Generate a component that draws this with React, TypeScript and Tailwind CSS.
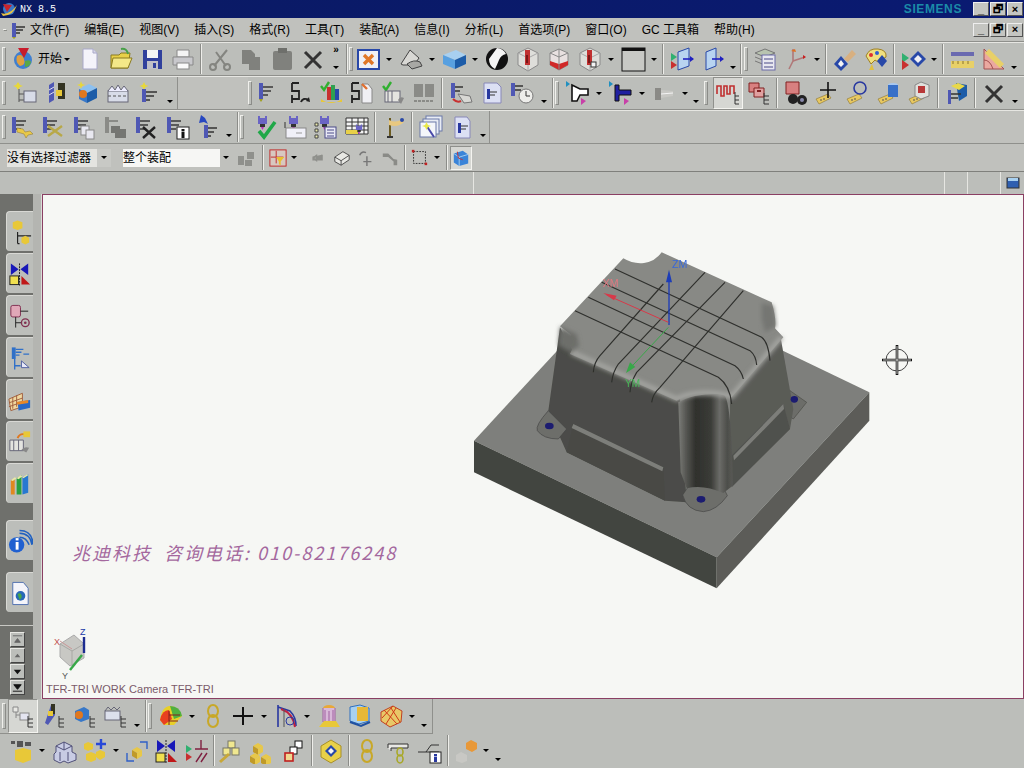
import type { ReactNode } from 'react'

// small helpers for the toolbars
function Ico({ children }: { children: ReactNode }) {
    return (
        <svg viewBox="0 0 26 26" className="h-[26px] w-[26px] shrink-0">
            {children}
        </svg>
    )
}

function T({ children, className = 'w-[31px]' }: { children: ReactNode; className?: string }) {
    return (
        <div className={`flex h-full shrink-0 items-center justify-center ${className}`}>
            <Ico>{children}</Ico>
        </div>
    )
}

function Arrow() {
    return (
        <div className="flex h-full w-[12px] shrink-0 items-center justify-center">
            <span className="border-x-[3px] border-t-[3px] border-x-transparent border-t-black" />
        </div>
    )
}

function More({ className = 'w-[12px]' }: { className?: string }) {
    return (
        <div className={`flex h-full shrink-0 items-end justify-center pb-[6px] ${className}`}>
            <span className="border-x-[3px] border-t-[3px] border-x-transparent border-t-black" />
        </div>
    )
}

function Sep() {
    return (
        <div className="flex h-full w-[6px] shrink-0 justify-center py-[1px]">
            <div className="w-[2px] border-l border-r border-l-[#8b8c88] border-r-[#eeeeea]" />
        </div>
    )
}

function Handle({ className = '' }: { className?: string }) {
    return (
        <div className={`my-[4px] w-[4px] shrink-0 rounded-[1px] border border-[#8b8c88] border-l-[#f0f0ec] border-t-[#f0f0ec] ${className}`} />
    )
}

function Row({ children }: { children: ReactNode }) {
    return (
        <div className="flex h-[34px] shrink-0 border-y border-t-[#e6e6e2] border-b-[#8f908c] bg-[#bcbeba]">
            {children}
        </div>
    )
}

// shared drawing bits
const Ent = () => (
    <g>
        <rect x="3" y="3" width="4" height="16" fill="#4f58b4" />
        <path d="M7 7h10M7 11h8M7 15h5" stroke="#3a3a3a" strokeWidth="1.6" />
    </g>
)
const Head = () => (
    <g>
        <path d="M7 2h2v2h5V2h2v8h-9z" fill="#6a64c4" />
        <rect x="9" y="10" width="5" height="3" fill="#333" />
        <path d="M10 13h3l-1.5 3z" fill="#c030c0" />
    </g>
)
const Tag = () => (
    <g>
        <path d="M2 19l12-5 3 4-12 6z" fill="#e8c860" stroke="#8a7430" strokeWidth=".6" />
        <path d="M6 20h2M9 19h2" stroke="#555" strokeWidth="1" />
    </g>
)
const RedDrill = () => (
    <g>
        <path d="M3 7l10-5 10 5v12l-10 6-10-6z" fill="#dedeDa" stroke="#8a8a8a" />
        <path d="M3 7l10 5 10-5M13 12v13" fill="none" stroke="#a8a8a8" />
        <rect x="10" y="4" width="5" height="15" fill="#c03030" />
        <rect x="11" y="9" width="2" height="8" fill="#7a1818" />
    </g>
)
const Cube = ({ fill = '#e8c848', side = '#c09a28' }: { fill?: string; side?: string }) => (
    <g>
        <path d="M4 9l5-3 5 3-5 3z" fill={fill} />
        <path d="M4 9l5 3v6l-5-3z" fill={side} />
        <path d="M14 9l-5 3v6l5-3z" fill={fill} />
    </g>
)
const Tree = () => <path d="M18 13v11M18 16h5M18 20h5M18 24h5" stroke="#333" strokeWidth="1" fill="none" />

export default function App() {
    return (
        <div className="flex h-[768px] w-[1024px] flex-col overflow-hidden bg-[#bcbeba] font-['Liberation_Sans','Noto_Sans_CJK_SC',sans-serif] text-black">
            {/* Title bar */}
            <div className="flex h-[18px] shrink-0 items-center bg-gradient-to-r from-[#0a1a63] to-[#0a1a72] pr-[1px]">
                <svg viewBox="0 0 18 18" className="h-[18px] w-[18px] shrink-0">
                    <circle cx="9" cy="9" r="6" fill="#3a78c8" />
                    <path d="M3 4l9 1-5 7z" fill="#c8242c" />
                    <path d="M1 13q8 3 16-8-3 10-14 11z" fill="#e8c040" />
                </svg>
                <span className="ml-[2px] font-['Liberation_Mono'] text-[10px] text-white">NX 8.5</span>
                <span className="ml-auto mr-[11px] text-[12px] font-bold tracking-[0.6px] text-[#1b8ba8]">SIEMENS</span>
                <WinButtons />
            </div>

            {/* Menu */}
            <div className="flex h-[24px] shrink-0 items-center border-b border-[#8f908c] bg-[#c0c1bd] pr-[1px] text-[12px]">
                <Handle className="ml-[3px]" />
                <svg viewBox="0 0 20 20" className="ml-[1px] h-[20px] w-[20px] shrink-0">
                    <rect x="4" y="3" width="4" height="14" fill="#4f58b4" />
                    <path d="M8 7h9M8 10h7M8 13h4" stroke="#333" strokeWidth="1.4" />
                    <path d="M4 17h4l-2 2z" fill="#a0a020" />
                </svg>
                <div className="flex gap-[15px] whitespace-nowrap pl-[2px]">
                    <span>文件(F)</span>
                    <span>编辑(E)</span>
                    <span>视图(V)</span>
                    <span>插入(S)</span>
                    <span>格式(R)</span>
                    <span>工具(T)</span>
                    <span>装配(A)</span>
                    <span>信息(I)</span>
                    <span>分析(L)</span>
                    <span>首选项(P)</span>
                    <span>窗口(O)</span>
                    <span>GC 工具箱</span>
                    <span>帮助(H)</span>
                </div>
                <div className="ml-auto"><WinButtons /></div>
            </div>

            {/* Toolbar 1 */}
            <Row>
                <Handle className="ml-[2px]" />
                <div className="flex h-full w-[68px] shrink-0 items-center pl-[5px] text-[12px]">
                    <svg viewBox="0 0 24 24" className="h-[24px] w-[24px] shrink-0">
                        <circle cx="12" cy="13" r="9" fill="#3f7fd0" />
                        <path d="M6 9q5-3 7 3t-4 7q-5-4-3-10z" fill="#e0a040" />
                        <path d="M14 14q5-2 6 1-1 5-6 5z" fill="#58a848" />
                        <path d="M7 1h11l-5 10z" fill="#c81c2c" />
                    </svg>
                    <span className="ml-[3px]">开始</span>
                    <span className="ml-[2px] border-x-[3px] border-t-[3px] border-x-transparent border-t-black" />
                </div>
                <T><path d="M6 3h10l4 4v16H6z" fill="#f4f4fa" stroke="#a8a8c8" /><path d="M16 3v4h4" fill="#d8d8e8" stroke="#a8a8c8" /></T>
                <T><path d="M3 9h8l2-2h9l-2 15H3z" fill="#e8d048" stroke="#8a7a20" /><path d="M5 12h19l-4 10H3z" fill="#f4e888" stroke="#8a7a20" /><path d="M13 3q6-1 7 5" stroke="#48a048" strokeWidth="2" fill="none" /></T>
                <T><rect x="4" y="4" width="19" height="19" fill="#30409c" /><rect x="8" y="4" width="11" height="8" fill="#f4f4f4" /><rect x="8" y="15" width="11" height="8" fill="#c0c0c8" /><rect x="14" y="17" width="3" height="5" fill="#30409c" /></T>
                <T><path d="M7 4h12v7H7z" fill="#f4f4f4" stroke="#888" /><path d="M3 11h20v8H3z" fill="#c8c8cc" stroke="#888" /><rect x="7" y="17" width="12" height="6" fill="#fafafa" stroke="#888" /></T>
                <Sep />
                <T><path d="M7 20L20 4M19 20L9 6" stroke="#848580" strokeWidth="2" /><circle cx="6" cy="21" r="3" fill="none" stroke="#848580" strokeWidth="2" /><circle cx="20" cy="21" r="3" fill="none" stroke="#848580" strokeWidth="2" /></T>
                <T><path d="M4 4h9l4 4v3h5v13H11v-6H4z" fill="#80817d" /></T>
                <T><rect x="4" y="5" width="19" height="19" rx="2" fill="#80817d" /><rect x="9" y="2" width="9" height="5" fill="#6e6f6b" /></T>
                <T><path d="M5 6l16 16M21 6L5 22" stroke="#333" strokeWidth="3" /></T>
                <div className="relative flex h-full w-[16px] shrink-0 flex-col items-center justify-between pb-[6px] pt-[1px] text-[10px] font-bold leading-[12px]">
                    <span>»</span>
                    <span className="border-x-[3px] border-t-[3px] border-x-transparent border-t-black" />
                </div>
                <Sep />
                <Handle className="-ml-[1px]" />
                <T className="w-[31px] -ml-[1px]"><rect x="3" y="4" width="21" height="19" fill="#f0f0f4" stroke="#2848a8" strokeWidth="2" /><path d="M9 9l9 9M18 9l-9 9" stroke="#e07828" strokeWidth="3.4" /></T>
                <Arrow />
                <T><path d="M3 18l9-14 9 8-5 7H5z" fill="#d8d8d4" stroke="#444" /><path d="M9 18q7-5 13-2l2 4-10 3z" fill="#a8a8a4" stroke="#444" /></T>
                <Arrow />
                <T><path d="M2 9l13-5 10 5-11 5z" fill="#a8d0f0" /><path d="M2 9l12 5v9L2 18z" fill="#58a0e0" /><path d="M25 9l-11 5v9l11-5z" fill="#1c5ca8" /></T>
                <Arrow />
                <T><circle cx="13" cy="13" r="11" fill="#111" /><path d="M13 2a11 11 0 0 1 9 6q-5 1-7 6t-4 9q-6-3-6-10" fill="#f4f4f4" /></T>
                <T><RedDrill /></T>
                <T><path d="M4 7l9-4 9 4v12l-9 5-9-5z" fill="#e8e0e0" stroke="#888" /><path d="M4 15l9 3 9-3v4l-9 5-9-5z" fill="#d02828" /><path d="M13 3v21M4 7l9 4 9-4" stroke="#888" fill="none" /></T>
                <T><RedDrill /><rect x="14" y="16" width="5" height="5" fill="#f4f4f4" stroke="#333" /></T>
                <Arrow />
                <T><rect x="2" y="2" width="23" height="23" fill="#c8c9c5" stroke="#111" /><rect x="2" y="2" width="23" height="3" fill="#111" /></T>
                <Arrow />
                <Sep />
                <T><path d="M9 6l11-4v18l-11 4z" fill="#b8d4f0" stroke="#2848a8" /><path d="M2 7l6 4-6 4z" fill="#30b070" /><path d="M2 15l6 4-6 4z" fill="#c83030" /><path d="M14 13h10" stroke="#2020c0" strokeWidth="1.6" /><path d="M21 10l4 3-4 3z" fill="#2020c0" /></T>
                <T><path d="M6 6l10-4v18l-10 4z" fill="#b8d4f0" stroke="#2848a8" /><path d="M12 13h11" stroke="#2020c0" strokeWidth="1.6" /><path d="M20 10l4 3-4 3z" fill="#2020c0" /></T>
                <More className="w-[10px]" />
                <Sep />
                <Handle />
                <div className="w-[1px] shrink-0" />
                <T><path d="M3 7l10-4 10 4-10 4z" fill="#b8c4b0" stroke="#777" /><path d="M3 11l10 4 10-4M3 15l10 4 10-4" fill="none" stroke="#777" /><rect x="10" y="9" width="13" height="15" fill="#e8e8f0" stroke="#6a6aa8" /><path d="M12 13h9M12 17h9M12 21h9" stroke="#4a4a88" /></T>
                <T><path d="M10 15L6 23M10 15V3M10 15L22 11" stroke="#b07878" strokeWidth="1.6" fill="none" /><path d="M8 5l4-2 1 3z" fill="#e07020" /><path d="M20 9l3 2-3 2z" fill="#c82020" /></T>
                <Arrow />
                <Sep />
                <T><path d="M2 18l7-8 7 8-7 7z" fill="#2848a8" /><path d="M6 18l3-4 3 4-3 3z" fill="#f4f4f4" /><path d="M12 13l8-9 4 4-8 8z" fill="#d8b080" /></T>
                <T><path d="M3 10q3-8 12-7t8 8l-8 5-3-2-4 4z" fill="#f0e080" stroke="#a08020" /><circle cx="8" cy="9" r="2" fill="#e03030" /><circle cx="14" cy="7" r="2" fill="#3060d0" /><path d="M14 15l5-6 5 6-5 6z" fill="#2848a8" /><path d="M9 18l-3 6h5z" fill="#e0c040" /></T>
                <Sep />
                <T><path d="M2 7l7 5-7 5z" fill="#30b070" /><path d="M2 14l7 5-7 5z" fill="#c83030" /><path d="M10 13l8-8 8 8-8 8z" fill="#2848a8" /><path d="M14 13l4-4 4 4-4 4z" fill="#f0f0f4" /></T>
                <Arrow />
                <Sep />
                <T><rect x="2" y="6" width="23" height="4" fill="#6a6ab0" /><rect x="2" y="15" width="23" height="7" fill="#e8d068" /><path d="M4 15v3M9 15v3M14 15v3M19 15v3" stroke="#8a7430" /></T>
                <T><path d="M4 3v20h20z" fill="#eaa8a0" stroke="#a05050" /><path d="M9 3l15 15-4 4L5 7z" fill="#e8d068" /><path d="M4 14q6 0 9 9" fill="none" stroke="#a05050" /></T>
                <More />
            </Row>

            {/* Toolbar 2 */}
            <Row>
                <Handle className="ml-[2px]" />
                <div className="w-[3px] shrink-0" />
                <T><path d="M6 2l2 3 3 1-3 1-2 3-2-3-3-1 3-1z" fill="#e8d838" /><path d="M7 9v13M7 14h6M7 20h6" stroke="#555" /><rect x="12" y="11" width="12" height="11" fill="#d8dce8" stroke="#667" /></T>
                <T><path d="M6 5l5-3v18l-5 3z" fill="#4f58b4" /><path d="M6 10l5-3M6 15l5-3" stroke="#e0e0f0" /><rect x="15" y="3" width="7" height="16" fill="#332" /><rect x="13" y="10" width="6" height="6" fill="#e8c838" /></T>
                <T><path d="M5 9l10-5 8 4-10 5z" fill="#8cc0f0" /><path d="M5 9l8 4v10l-8-4z" fill="#3878c8" /><path d="M23 8l-10 5v10l10-5z" fill="#1c5ca8" /><circle cx="9" cy="14" r="4" fill="#e07820" /><path d="M7 1l1 3 3 1-3 1-1 3-1-3-3-1 3-1z" fill="#e8d838" /></T>
                <T><rect x="3" y="11" width="20" height="11" fill="#d8dce8" stroke="#667" /><path d="M3 11l4-5 3 4 3-5 3 5 3-4 4 5" stroke="#667" fill="#eef" /><path d="M3 16h20" stroke="#555" strokeDasharray="3 2" /></T>
                <T><path d="M8 2l1.5 3 3 1-3 1-1.5 3-1.5-3-3-1 3-1z" fill="#e8d838" /><rect x="6" y="9" width="4" height="13" fill="#4f58b4" /><path d="M10 12h11M10 16h8M10 20h4" stroke="#333" strokeWidth="1.5" /></T>
                <More />
                <div className="ml-[1px] w-[71px] shrink-0 border-l border-l-[#8f908c] bg-[#c0c1bd]" />
                <Handle />
                <div className="w-[1px] shrink-0" />
                <T><Ent /><path d="M3 19h4l-2 3z" fill="#a0a020" /></T>
                <T><path d="M5 3h7M5 3v8h7v8H5v-4M5 19v4" stroke="#222" strokeWidth="1.8" fill="none" /><path d="M14 22q2-5 8-2" fill="none" stroke="#222" strokeWidth="2" /><path d="M22 17l1 5-4-1z" fill="#222" /></T>
                <T><rect x="9" y="7" width="4" height="13" fill="#c83030" /><rect x="13" y="5" width="4" height="15" fill="#30a050" /><rect x="17" y="9" width="4" height="11" fill="#2848a8" /><path d="M3 19q10 8 21 0v3H3z" fill="#e8c838" /><path d="M3 6l3 4 5-8" stroke="#30b030" strokeWidth="2.4" fill="none" /></T>
                <T><path d="M3 3h7M3 3v8h7v8H3v-4M3 19v4" stroke="#222" strokeWidth="1.8" fill="none" /><path d="M13 4h6l4 5v14H13z" fill="#f0f0f4" stroke="#888" /><path d="M13 4l5 5" stroke="#e07030" strokeWidth="2.4" /></T>
                <T><path d="M3 6l3 4 5-8" stroke="#30b030" strokeWidth="2.4" fill="none" /><rect x="5" y="11" width="15" height="11" fill="#e4e4e0" stroke="#667" /><path d="M8 11v11M12 11v11" stroke="#667" /><path d="M18 20q2-4 6-2l-3 6z" fill="#888" /></T>
                <T><path d="M3 4h9v13H3zM14 4h9v13h-9z" fill="#8a8b87" /><path d="M3 21h20" stroke="#8a8b87" strokeWidth="2" strokeDasharray="3 1" /></T>
                <Sep />
                <T><rect x="3" y="3" width="4" height="15" fill="#4f58b4" /><path d="M7 7h8M7 11h5" stroke="#333" strokeWidth="1.5" /><path d="M10 14l12 2 2 6-8 1z" fill="#d8d8d4" stroke="#777" /><path d="M5 19q4 4 8 2" stroke="#c83030" strokeWidth="2" fill="none" /></T>
                <T><path d="M5 3h13l4 4v16H5z" fill="#dce0f4" stroke="#8888b8" /><rect x="8" y="9" width="3" height="10" fill="#2838a0" /><path d="M11 12h7M11 15h5" stroke="#333" /></T>
                <T><rect x="1" y="3" width="4" height="13" fill="#4f58b4" /><path d="M5 6h8M5 10h6" stroke="#333" strokeWidth="1.4" /><circle cx="16" cy="16" r="7" fill="#ededea" stroke="#777" /><path d="M16 11v5h4" stroke="#333" fill="none" /></T>
                <More />
                <Sep />
                <Handle className="-ml-[1px]" />
                <div className="w-[3px] shrink-0" />
                <T><path d="M7 5l8 4h8v6h-8l-3 6H7z" fill="#fff" stroke="#111" strokeWidth="1.6" /><path d="M1 1l4 3-4 3z" fill="#2090c0" /><path d="M16 18l5 3-5 4z" fill="#c840a8" /></T>
                <Arrow />
                <T><path d="M7 5h4v5h12v5H11v6H7z" fill="#2020a0" stroke="#111" /><path d="M1 1l4 3-4 3z" fill="#2090c0" /><path d="M16 18l5 3-5 4z" fill="#c840a8" /></T>
                <Arrow />
                <T><rect x="4" y="8" width="6" height="12" fill="#8a8a86" /><path d="M10 10l12 1v5l-12 2z" fill="#c8c8c4" /><path d="M10 14l12-1" stroke="#f4f4f4" /></T>
                <Arrow />
                <More className="w-[10px]" />
                <Handle className="ml-[3px]" />
                <div className="w-[5px] shrink-0" />
                <div className="flex h-full w-[30px] shrink-0 items-center justify-center border border-t-[#8f908c] border-l-[#8f908c] border-r-[#f4f4f0] border-b-[#f4f4f0] bg-[#d6d7d3]">
                    <Ico>
                        <path d="M2 14V6h4v10h3V6h3v8h3V6h4v8" fill="none" stroke="#c03030" strokeWidth="1.6" />
                        <path d="M20 12v12M20 16h4M20 20h4M20 24h4" stroke="#333" fill="none" />
                    </Ico>
                </div>
                <T><path d="M3 3h10v9H3z" fill="#d88080" stroke="#802020" /><path d="M8 8h10v9H8z" fill="#e0a0a0" stroke="#802020" /><path d="M11 11h4" stroke="#802020" strokeWidth="2" /><Tree /></T>
                <Sep />
                <T><path d="M3 2h13v12H3z" fill="#d88080" stroke="#802020" /><circle cx="10" cy="19" r="5" fill="#222" /><circle cx="19" cy="20" r="5" fill="#222" /><circle cx="19" cy="20" r="2" fill="#88a" /></T>
                <T><Tag /><path d="M14 2v16M6 10h16" stroke="#111" strokeWidth="1.6" /></T>
                <T><Tag /><circle cx="15" cy="8" r="6" fill="none" stroke="#2838a0" strokeWidth="1.6" /></T>
                <T><Tag /><ellipse cx="17" cy="5" rx="5" ry="2" fill="#a8c8f0" /><path d="M12 5h10v12h-10z" fill="#3870c8" /></T>
                <T><Tag /><path d="M8 5l6-3 8 3v11l-8 3-6-3z" fill="#e0e0dc" stroke="#888" /><path d="M11 6h7v7h-7z" fill="#b83838" /></T>
                <Sep />
                <T><path d="M12 3l11 2v11l-8 5z" fill="#1c5ca8" /><path d="M7 6l7-3 7 3-6 4z" fill="#e8d848" /><rect x="4" y="10" width="3" height="14" fill="#4f58b4" /><path d="M7 14h10M7 18h7" stroke="#333" strokeWidth="1.5" /></T>
                <Sep />
                <T><path d="M5 6l16 16M21 6L5 22" stroke="#333" strokeWidth="3" /></T>
                <More />
            </Row>

            {/* Toolbar 3 */}
            <Row>
                <Handle className="ml-[2px]" />
                <T><Ent /><path d="M8 14l6 1 2 3 5-1 3 3-5 1-2 3-2-4-7-2z" fill="#e8c848" stroke="#8a7430" strokeWidth=".5" /></T>
                <T><Ent /><path d="M8 12l14 10M22 12L8 22" stroke="#b8a848" strokeWidth="2.4" /></T>
                <T><Ent /><rect x="10" y="12" width="8" height="9" fill="#e8e8f0" stroke="#888" /><rect x="15" y="16" width="8" height="9" fill="#e8e8f0" stroke="#888" /></T>
                <T><rect x="3" y="3" width="4" height="16" fill="#8a8b87" /><path d="M7 7h9" stroke="#8a8b87" strokeWidth="2" /><path d="M9 12h9v3h6v9H13v-5H9z" fill="#757672" /></T>
                <T><Ent /><path d="M10 13l12 11M22 13L10 24" stroke="#222" strokeWidth="2.4" /></T>
                <T><Ent /><rect x="13" y="13" width="12" height="12" fill="#fff" stroke="#222" /><rect x="17.5" y="15" width="3" height="2.4" fill="#111" /><rect x="17.5" y="18" width="3" height="6" fill="#111" /></T>
                <T><path d="M6 1l4 3 3 6-4-2-5 1z" fill="#2848c0" /><rect x="9" y="11" width="4" height="13" fill="#4f58b4" /><path d="M13 14h9M13 18h6M13 22h3" stroke="#333" strokeWidth="1.6" /></T>
                <More />
                <Sep />
                <Handle className="-ml-[1px]" />
                <div className="w-[4px] shrink-0" />
                <T><Head /><path d="M8 17l5 6L24 8" stroke="#20a848" strokeWidth="3.6" fill="none" /></T>
                <T><Head /><rect x="4" y="14" width="20" height="10" fill="#f0f0f8" stroke="#888" /><path d="M3 8v6" stroke="#333" /><path d="M14 19h6" stroke="#999" /></T>
                <T><Head /><rect x="12" y="13" width="11" height="11" fill="#e8e8f4" stroke="#4a4a88" /><path d="M14 16h7M14 19h7M14 22h7" stroke="#4a4a88" /><path d="M2 9h3v3H2zM2 15h3v3H2zM2 21h3v3H2z" fill="#e8e8a8" stroke="#444" /></T>
                <T><path d="M2 4h22v16H2z" fill="#f4f4f4" stroke="#333" /><path d="M2 8h22M2 12h22M2 16h22M8 4v16M14 4v16M20 4v16" stroke="#333" /><path d="M2 16h12v4H2z" fill="#e8d048" /><g transform="translate(7 9) scale(.7)"><Head /></g></T>
                <Sep />
                <T><rect x="8" y="4" width="2" height="19" fill="#6a5a20" /><rect x="6" y="22" width="6" height="2" fill="#333" /><path d="M8 6q8 4 14-2l1 4q-6 6-15 3z" fill="#e8c880" /><circle cx="21" cy="6" r="2" fill="#2848a8" /></T>
                <Sep />
                <T><rect x="8" y="2" width="16" height="15" fill="#e8ecf4" stroke="#6a78a8" /><rect x="5" y="5" width="16" height="15" fill="#e8ecf4" stroke="#6a78a8" /><rect x="2" y="8" width="16" height="15" fill="#f4f6fa" stroke="#6a78a8" /><path d="M8 11l8 12" stroke="#4848a8" strokeWidth="2" /><path d="M7 11l1.5-3 1.5 3 3 1-3 1-1.5 3-1.5-3-3-1z" fill="#e8e848" /></T>
                <T><path d="M6 3h12l3 4v17H6z" fill="#dce0f4" stroke="#8888b8" /><rect x="9" y="9" width="3" height="10" fill="#2838a0" /><path d="M12 12h7M12 15h5" stroke="#333" /></T>
                <More />
                <div className="flex-1 border-l border-l-[#8f908c] bg-[#c0c1bd]" />
            </Row>

            {/* Selection filter row */}
            <div className="flex h-[27px] shrink-0 items-center bg-[#c0c1bd] text-[12px]">
                <div className="ml-[7px] flex h-[18px] w-[90px] shrink-0 items-center bg-[#e4e4e0]">
                    <span className="whitespace-nowrap">没有选择过滤器</span>
                </div>
                <div className="flex h-[18px] w-[14px] shrink-0 items-center justify-center bg-[#c8c9c5]">
                    <span className="border-x-[3px] border-t-[3px] border-x-transparent border-t-black" />
                </div>
                <div className="ml-[12px] flex h-[18px] w-[97px] shrink-0 items-center bg-[#f6f6f4]">
                    <span>整个装配</span>
                </div>
                <Arrow />
                <div className="flex h-full w-[28px] shrink-0 items-center justify-center">
                    <svg viewBox="0 0 20 20" className="h-[20px] w-[20px]"><path d="M2 8h6v9H2zM11 4h7v7h-7zM9 12h7v6H9z" fill="#8f908c" /></svg>
                </div>
                <Sep />
                <div className="flex h-full w-[24px] shrink-0 items-center justify-center">
                    <svg viewBox="0 0 20 20" className="h-[18px] w-[18px]"><rect x="1" y="1" width="18" height="18" fill="#d8c8c0" stroke="#c02020" /><path d="M8 2v14M2 9h14" stroke="#c02020" /><path d="M8 9h9l-4 5v4l-2-1v-3z" fill="#e8c030" /></svg>
                </div>
                <span className="ml-[1px] mr-[8px] border-x-[3px] border-t-[3px] border-x-transparent border-t-black" />
                <div className="flex h-full w-[25px] shrink-0 items-center justify-center">
                    <svg viewBox="0 0 20 20" className="h-[16px] w-[16px]"><path d="M4 8v4h11V6M4 10l4-3v6z" stroke="#8f908c" strokeWidth="2" fill="#8f908c" /></svg>
                </div>
                <div className="flex h-full w-[24px] shrink-0 items-center justify-center">
                    <svg viewBox="0 0 20 20" className="h-[18px] w-[18px]"><path d="M2 9l9-6 7 4v5l-9 6-7-4z" fill="#e8e8e4" stroke="#444" /><path d="M2 9l7 4 9-6M9 13v5" stroke="#444" fill="none" /></svg>
                </div>
                <div className="flex h-full w-[24px] shrink-0 items-center justify-center">
                    <svg viewBox="0 0 20 20" className="h-[18px] w-[18px]"><path d="M3 7q2-5 7-3M11 8v11M7 14h9" stroke="#777" strokeWidth="1.6" fill="none" /></svg>
                </div>
                <div className="flex h-full w-[24px] shrink-0 items-center justify-center">
                    <svg viewBox="0 0 20 20" className="h-[18px] w-[18px]"><path d="M2 5h6l6 6 4 1v6h-4v-4l-6-5H2z" fill="#8a8b87" /></svg>
                </div>
                <Sep />
                <div className="flex h-full w-[22px] shrink-0 items-center justify-center">
                    <svg viewBox="0 0 20 20" className="h-[17px] w-[17px]"><rect x="3" y="3" width="14" height="14" fill="none" stroke="#222" strokeDasharray="2 1.4" /><rect x="1" y="1" width="3" height="3" fill="#c02020" /><rect x="16" y="16" width="3" height="3" fill="#c02020" /></svg>
                </div>
                <span className="ml-[4px] mr-[4px] border-x-[3px] border-t-[3px] border-x-transparent border-t-black" />
                <Sep />
                <div className="flex h-[24px] w-[22px] shrink-0 items-center justify-center border border-b-[#f4f4f0] border-l-[#8f908c] border-r-[#f4f4f0] border-t-[#8f908c] bg-[#d6d7d3]">
                    <svg viewBox="0 0 20 20" className="h-[18px] w-[18px]"><path d="M2 5l10-3 6 4v10l-10 3-6-4z" fill="#3a84d8" /><path d="M2 5l6 4 10-3" fill="none" stroke="#a8d0f0" /><path d="M8 9v10" stroke="#a8d0f0" /><path d="M6 3l1 7 5 2" fill="none" stroke="#c83030" /></svg>
                </div>
            </div>

            {/* Status row */}
            <div className="flex h-[23px] shrink-0 border-t border-t-[#7f807c] bg-[#bcbeba]">
                <div className="w-[474px] shrink-0 border-r border-r-[#e6e6e2]" />
                <div className="w-[471px] shrink-0 border-r border-r-[#e6e6e2]" />
                <div className="w-[23px] shrink-0 border-r border-r-[#e6e6e2]" />
                <div className="w-[33px] shrink-0 border-r border-r-[#e6e6e2]" />
                <div className="flex flex-1 items-center justify-center bg-[#bcbeba]">
                    <svg viewBox="0 0 14 14" className="h-[14px] w-[14px]"><rect x="1" y="2" width="12" height="10" fill="#2f5fb0" stroke="#333" /><rect x="2" y="2" width="10" height="3" fill="#a8d0f0" /></svg>
                </div>
            </div>

            {/* Main area */}
            <div className="flex h-[505px] shrink-0">
                <div className="flex w-[33px] shrink-0 flex-col items-end bg-[#6f706c] pt-[17px]">
                    <div className="flex flex-col gap-[2px]">
                        <Rail><path d="M6 3l5-2 5 2v6l-5 2-5-2z" fill="#e8c838" /><path d="M11 13v12M11 17h14M11 25h2" stroke="#222" strokeWidth="1.2" /><path d="M15 19l4-2 4 2v5l-4 2-4-2z" fill="#e8c838" /></Rail>
                        <Rail><path d="M4 2l8 6-8 6zM22 2l-8 6 8 6z" fill="#1818b8" /><path d="M13 2v23" stroke="#222" strokeDasharray="2 1" /><rect x="3" y="15" width="9" height="9" fill="#f0e050" stroke="#222" /><path d="M15 15l9 9h-9z" fill="#c01818" /></Rail>
                        <Rail><rect x="4" y="2" width="10" height="12" rx="2" fill="#e0a8b8" stroke="#803050" /><path d="M14 8h8M9 14v11M9 20h6" stroke="#222" /><circle cx="19" cy="20" r="4" fill="none" stroke="#803050" strokeWidth="1.4" /><circle cx="19" cy="20" r="1.4" fill="#803050" /></Rail>
                        <Rail><rect x="5" y="2" width="4" height="12" fill="#3070c8" /><path d="M9 4h8M9 7h6M9 10h4M17 9h6M8 14v11M8 21h6" stroke="#3070c8" strokeWidth="1.4" /><path d="M15 16v7h8z" fill="#e8e8f8" stroke="#5060a0" /></Rail>
                        <Rail><path d="M2 12l14-6v14L4 24z" fill="#f0d8a0" stroke="#a06040" /><path d="M6 10v12M10 8v12M2 16l14-5M2 20l14-5" stroke="#a06040" /><path d="M11 15l13-2v8l-12 3z" fill="#2868c8" /><path d="M10 15l12-2v3l-11 2z" fill="#e88828" /></Rail>
                        <Rail><path d="M3 11h14v11H3z" fill="#e4e4e0" stroke="#667" /><path d="M7 11v11M12 11v11" stroke="#667" /><path d="M15 21q3-4 8-2l-3 5z" fill="#888" /><path d="M11 9q2-5 7-4" stroke="#e07820" strokeWidth="2" fill="none" /><path d="M17 2h7v6h-7z" fill="#e8c838" /></Rail>
                        <Rail><path d="M4 9l4-2v17H4z" fill="#e08820" /><path d="M10 7l5-3v20h-5z" fill="#28a040" /><path d="M16 6l6-3v19l-6 2z" fill="#2878d0" /><path d="M4 9l4-3 2 1-4 3M10 7l4-3 2 1-4 3M16 6l5-3 1 1-5 3" fill="#e8e8a8" /></Rail>
                    </div>
                    <div className="mt-[17px]">
                        <Rail><path d="M13 9q7 0 10 8M13 5q11 0 13 12M13 2q13 0 14 14" stroke="#2060c0" strokeWidth="1.6" fill="none" /><circle cx="10" cy="17" r="8" fill="#2060d0" /><rect x="9" y="14" width="3" height="8" fill="#fff" /><rect x="9" y="10" width="3" height="2.4" fill="#fff" /></Rail>
                    </div>
                    <div className="mt-[12px]">
                        <Rail><path d="M6 2h11l5 6v17H6z" fill="#f4f4fa" stroke="#5070b0" /><circle cx="14" cy="16" r="5" fill="#2868b8" /><path d="M11 14q3-2 4 1t-2 5z" fill="#48a848" /></Rail>
                    </div>
                    <div className="mt-[13px] flex w-[33px] flex-col items-center gap-[1px] border-t border-t-[#c8c8c4] pl-[2px] pt-[6px]">
                        <Spin><path d="M2 3h10M4 10l3-4 3 4z" stroke="#666" fill="#666" /></Spin>
                        <Spin><path d="M4 9l3-4 3 4z" fill="#666" /></Spin>
                        <Spin><path d="M3 5h8l-4 5z" fill="#111" /></Spin>
                        <Spin><path d="M3 4h8l-4 5zM2 11h10" stroke="#111" fill="#111" /></Spin>
                    </div>
                </div>
                <div className="w-[9px] shrink-0 border-r border-r-[#dcdcd8] bg-[#b4b5b1]" />
                <div className="relative flex-1 overflow-hidden border border-[#8a3f63] bg-[#f6f7f4]">
                    <svg viewBox="43 196 980 503" className="absolute inset-0 h-full w-full">
                        <defs>
                            <linearGradient id="col" x1="0" x2="1" y1="0" y2="0">
                                <stop offset="0" stopColor="#7c7d79" />
                                <stop offset="0.14" stopColor="#565753" />
                                <stop offset="0.32" stopColor="#2f302c" />
                                <stop offset="0.6" stopColor="#3b3c38" />
                                <stop offset="0.76" stopColor="#6b6c68" />
                                <stop offset="0.9" stopColor="#4d4e4a" />
                                <stop offset="1" stopColor="#585955" />
                            </linearGradient>
                            <filter id="soft" x="-5%" y="-5%" width="110%" height="110%">
                                <feGaussianBlur stdDeviation="1.6" />
                            </filter>
                            <filter id="softer" x="-20%" y="-20%" width="140%" height="140%">
                                <feGaussianBlur stdDeviation="6" />
                            </filter>
                        </defs>

                        {/* model, coordinates taken at 3x from the model's corner */}
                        <g transform="translate(460 240) scale(0.33333)" filter="url(#soft)">
                            <path d="M42 605L770 955L1228 460L500 110Z" fill="#7e7f7b" />
                            <path d="M42 605L770 955V1048L42 700Z" fill="#434540" />
                            <path d="M770 955L1228 460V545L770 1048Z" fill="#5b5c58" />

                            <path d="M990 455L1040 490L1000 540L970 520Z" fill="#6c6d69" stroke="#4a4b47" strokeWidth="2" />
                            <path d="M810 470L960 285L1000 510L990 570L810 745Z" fill="#5a5b57" />
                            <path d="M300 265L265 515L320 640L615 785L680 790L660 480L340 340Z" fill="#4b4c48" />
                            <path d="M265 515Q225 560 232 575Q250 600 295 600L320 570Z" fill="#6d6e6a" stroke="#444" strokeWidth="2" />
                            <path d="M668 768Q680 815 730 818Q770 815 802 770L785 735H690Z" fill="#6d6e6a" stroke="#444" strokeWidth="2" />
                            <ellipse cx="268" cy="561" rx="13" ry="10" fill="#1c1c70" />
                            <ellipse cx="723" cy="781" rx="13" ry="10" fill="#1c1c70" />
                            <ellipse cx="1003" cy="481" rx="11" ry="10" fill="#1c1c70" />

                            <path d="M320 640L340 555L610 685L615 785Z" fill="#484945" />
                            <path d="M340 555L610 685L607 697L335 567Z" fill="#7d7e7a" />
                            <path d="M815 650L970 495L990 570L815 745Z" fill="#50514d" />
                            <path d="M820 650L970 495L972 510L822 664Z" fill="#7d7e7a" />

                            <path d="M655 490Q700 462 790 465Q815 480 818 740L790 762Q730 735 680 748L662 700Z" fill="url(#col)" />

                            <path d="M490 58Q520 76 552 72Q585 68 605 40L935 190Q950 240 945 268L970 295L815 475Q715 445 650 485L330 345L350 300L300 262Z" fill="#888985" />
                            <path d="M335 340L650 480Q715 448 815 472L965 295" fill="none" stroke="#a5a6a2" strokeWidth="14" filter="url(#softer)" />
                            <path d="M300 262L350 285L358 320L330 340L295 318Z" fill="#6d6e6a" filter="url(#softer)" />
                            <path d="M905 192L940 200L948 262L915 280L905 240Z" fill="#757672" filter="url(#softer)" />

                            <g fill="none" stroke="#2e2f2c" strokeWidth="3.5">
                                <path d="M465 90L905 295Q925 310 930 365" />
                                <path d="M425 130L870 335Q888 350 890 378" />
                                <path d="M385 175L825 380Q845 395 850 420" />
                                <path d="M345 215L775 415Q810 440 815 495" />
                                <path d="M610 135L420 350Q402 370 400 400" />
                                <path d="M735 100L475 375Q458 400 455 430" />
                                <path d="M795 130L530 400Q512 430 510 460" />
                                <path d="M850 155L600 445Q578 465 575 490" />
                            </g>

                            <path d="M627 258V120" stroke="#1c3cb8" strokeWidth="4" />
                            <path d="M627 92L636 130H618Z" fill="#1c3cb8" />
                            <text x="636" y="88" fontSize="32" fill="#3868d8" fontFamily="Liberation Sans">ZM</text>
                            <path d="M625 250L440 168" stroke="#d83848" strokeWidth="3" />
                            <path d="M430 162L470 170L462 184Z" fill="#d83848" />
                            <text x="428" y="145" fontSize="32" fill="#e07880" fontFamily="Liberation Sans">XM</text>
                            <path d="M625 265L510 388" stroke="#38a848" strokeWidth="3" />
                            <path d="M498 402L510 370L526 384Z" fill="#38a848" />
                            <text x="495" y="445" fontSize="30" fill="#48b858" fontFamily="Liberation Sans">YM</text>
                        </g>

                        {/* cursor */}
                        <circle cx="897" cy="361" r="11" fill="none" stroke="#444" />
                        <path d="M897 346V376M882 361H912" stroke="#111" strokeWidth="2.6" />
                        <path d="M897 347V375M883 361H911" stroke="#f6f7f4" strokeWidth="0.8" />

                        {/* corner triad */}
                        <path d="M60 645L74 636L84 645L84 659L70 667L60 658Z" fill="#c8c8c4" stroke="#aaa" />
                        <path d="M60 645L72 652L84 645M72 652V667" fill="none" stroke="#a8a8a4" />
                        <path d="M84 654V638" stroke="#1c2c90" strokeWidth="2.4" />
                        <path d="M82 656L70 671" stroke="#38a848" strokeWidth="2.4" />
                        <path d="M60 642L72 650" stroke="#c89898" />
                        <text x="54" y="646" fontSize="9" fill="#c05050" fontFamily="Liberation Sans">X</text>
                        <text x="62" y="680" fontSize="9" fill="#555" fontFamily="Liberation Sans">Y</text>
                        <text x="80" y="636" fontSize="9" fill="#2038a8" fontFamily="Liberation Sans">Z</text>
                    </svg>

                    <div className="absolute left-[29px] top-[344px] whitespace-nowrap font-['Noto_Sans_CJK_SC',sans-serif] text-[18px] italic tracking-[2px] text-[#a4689e]">
                        兆迪科技&nbsp;&nbsp;咨询电话: 010-82176248
                    </div>
                    <div className="absolute bottom-[1px] left-[3px] whitespace-nowrap text-[11px] text-[#7a5a6a]">
                        TFR-TRI WORK Camera TFR-TRI
                    </div>
                </div>
            </div>

            {/* Bottom toolbar 1 */}
            <div className="flex h-[35px] shrink-0 bg-[#bcbeba]">
                <div className="flex h-full w-[433px] shrink-0 border-b border-r border-b-[#8f908c] border-r-[#8f908c]">
                    <Handle className="ml-[2px]" />
                    <div className="w-[2px] shrink-0" />
                    <div className="flex h-full w-[30px] shrink-0 items-center justify-center border border-b-[#f4f4f0] border-l-[#8f908c] border-r-[#f4f4f0] border-t-[#8f908c] bg-[#d6d7d3]">
                        <Ico><path d="M3 4h5v5H3zM6 9v6M6 12h5" stroke="#888" fill="#e8e8e4" /><rect x="10" y="10" width="9" height="7" fill="#e4e4f0" stroke="#888" /><Tree /></Ico>
                    </div>
                    <T><path d="M10 2l4-1v11l-7 10-3-2z" fill="#4f58b4" /><rect x="10" y="1" width="4" height="10" fill="#332" /><rect x="7" y="8" width="5" height="5" fill="#e8c838" /><Tree /></T>
                    <T><path d="M3 8l9-4 5 3v9l-8 3-6-3z" fill="#3878c8" /><circle cx="7" cy="12" r="4" fill="#e07820" /><Tree /></T>
                    <T><rect x="2" y="8" width="15" height="9" fill="#dce0ec" stroke="#667" /><path d="M2 8l3-4 3 3 3-3 3 3 3-3" fill="none" stroke="#667" /><Tree /></T>
                    <More />
                    <Sep />
                    <Handle className="-ml-[1px]" />
                    <div className="w-[3px] shrink-0" />
                    <T><path d="M2 17Q4 3 12 3t12 10l-8 9H6z" fill="#e8d028" /><path d="M12 3q10 0 12 10l-8 3z" fill="#50b040" /><path d="M2 17q2-10 9-10l3 9-8 6z" fill="#e84020" /><path d="M11 8v14M11 12h11M11 18h9" stroke="#802020" /></T>
                    <Arrow />
                    <T className="w-[29px]"><ellipse cx="13" cy="8" rx="5" ry="6" fill="none" stroke="#c8a828" strokeWidth="2" /><ellipse cx="13" cy="18" rx="5" ry="6" fill="none" stroke="#c8a828" strokeWidth="2" /></T>
                    <T><path d="M13 4v18M3 13h20" stroke="#111" strokeWidth="2" /></T>
                    <Arrow />
                    <T><path d="M5 2v22M5 4l12 4q6 6 6 15" stroke="#2838a0" strokeWidth="1.6" fill="none" /><path d="M8 6q12 4 14 18" stroke="#c02040" strokeWidth="2" fill="none" /><circle cx="17" cy="18" r="4" fill="none" stroke="#2838a0" /><path d="M11 6v18" stroke="#555" /></T>
                    <Arrow />
                    <T><ellipse cx="13" cy="5" rx="6" ry="3" fill="#e8a838" /><path d="M7 5v14h12V5" fill="#d8b8d8" stroke="#a060a0" /><path d="M13 8v12M9 7v13M17 7v13" stroke="#a060a0" /><path d="M3 24l5-6h12l4 6z" fill="#e8c838" /></T>
                    <T><path d="M3 4l10-2 9 3v13l-10 3-9-3z" fill="#a8d0f0" stroke="#3070c0" /><rect x="10" y="4" width="11" height="14" fill="#e8b838" /><path d="M3 19l11 4 9-4" stroke="#2050a0" strokeWidth="2" fill="none" /></T>
                    <T><path d="M3 9l12-6 9 5-1 11-11 5-9-6z" fill="#e8c868" stroke="#c04020" /><path d="M6 7l13 14M13 5l9 14M18 5L8 21M4 15L15 3" stroke="#d03818" /></T>
                    <Arrow />
                    <More />
                </div>
            </div>

            {/* Bottom toolbar 2 */}
            <div className="flex h-[33px] shrink-0 bg-[#bcbeba] pl-[8px]">
                <T className="w-[28px]"><path d="M6 12l8-2 8 2v10l-8 3-8-3z" fill="#e8c838" /><path d="M2 3h4v3H2zM8 3h6v6H8zM16 4h6v4h-6z" fill="#555" /></T>
                <Arrow />
                <T className="w-[31px]"><path d="M5 8l8-4 8 4v6l4 2v6l-8 3-4-2-4 2-6-3v-6l2-2z" fill="#c8cce4" stroke="#505078" /><path d="M13 4v8M5 8l8 4 8-4M9 14v9M17 14v9" stroke="#505078" fill="none" /></T>
                <T><path d="M2 6l4-2 5 2v5l-5 2-4-2z" fill="#e8c838" /><path d="M4 16l5-2 5 2v6l-5 2-5-2z" fill="#e8c838" /><path d="M14 14l4-2 5 2v5l-5 3-4-3z" fill="#e8c838" /><path d="M19 1v10M14 6h10" stroke="#2848d8" strokeWidth="2.4" /></T>
                <Arrow />
                <T className="w-[29px]"><g transform="translate(4 3)"><Cube /></g><path d="M16 4h7v7M3 15v8h7" fill="none" stroke="#3060c8" strokeWidth="1.4" /></T>
                <T className="w-[30px]"><path d="M4 2l8 6-8 6zM22 2l-8 6 8 6z" fill="#1818b8" /><path d="M13 2v23" stroke="#222" strokeDasharray="2 1" /><rect x="3" y="15" width="9" height="9" fill="#f0e050" stroke="#222" /><path d="M15 15l9 9h-9z" fill="#c01818" /></T>
                <T className="w-[30px]"><path d="M3 7l6 4-6 4z" fill="#30b070" /><path d="M3 15l6 4-6 4z" fill="#c83030" /><path d="M18 2v9M12 11h13M13 24l6-9M18 24l6-9" stroke="#802040" strokeWidth="1.4" /></T>
                <Sep />
                <T className="w-[28px]"><rect x="10" y="3" width="7" height="7" fill="#f0e890" stroke="#776" /><rect x="5" y="10" width="7" height="7" fill="#f0e890" stroke="#776" /><rect x="14" y="10" width="7" height="7" fill="#f0e890" stroke="#776" /><path d="M2 24l9-8" stroke="#c8a838" strokeWidth="3" /></T>
                <T><g transform="translate(1 -1)"><Cube /></g><g transform="translate(-2 9)"><Cube /></g><g transform="translate(9 10)"><Cube /></g></T>
                <T className="w-[33px]"><rect x="15" y="3" width="7" height="7" fill="#fff" stroke="#111" /><rect x="10" y="9" width="7" height="7" fill="#fff" stroke="#111" /><rect x="5" y="15" width="8" height="8" fill="#f0d890" stroke="#c02020" strokeWidth="1.6" /></T>
                <Sep />
                <T><path d="M13 2l10 6v11l-10 6-10-6V8z" fill="#e8d048" stroke="#a89028" /><path d="M13 7l6 6-6 6-6-6z" fill="#2848a8" /><path d="M13 10l3 3-3 3-3-3z" fill="#f4f4f4" /></T>
                <Sep />
                <T className="w-[30px]"><ellipse cx="13" cy="8" rx="5" ry="6" fill="none" stroke="#c8a828" strokeWidth="2" /><ellipse cx="13" cy="18" rx="5" ry="6" fill="none" stroke="#c8a828" strokeWidth="2" /></T>
                <T className="w-[31px]"><path d="M3 10V6h20v4H6v3" fill="#e8e8e4" stroke="#333" /><ellipse cx="15" cy="14" rx="3" ry="4" fill="none" stroke="#a8a828" strokeWidth="1.6" /><ellipse cx="15" cy="21" rx="3" ry="4" fill="none" stroke="#a8a828" strokeWidth="1.6" /></T>
                <T className="w-[32px]"><path d="M2 14h8M10 14l5-7h8M10 14h13" stroke="#333" fill="none" /><rect x="14" y="14" width="11" height="11" fill="#fff" stroke="#222" /><rect x="18" y="16" width="3" height="2.4" fill="#2838a0" /><rect x="18" y="19" width="3" height="5" fill="#2838a0" /></T>
                <Sep />
                <T className="w-[29px]"><path d="M13 5l5-3 6 3v6l-5 3-6-3z" fill="#e89838" /><path d="M3 17l5-3 6 3v6l-5 2-6-2z" fill="#c8c8c4" /></T>
                <Arrow />
                <More />
            </div>
        </div>
    )
}

function WinButtons() {
    return (
        <div className="flex gap-[1px]">
            {['_', '🗗', '×'].map((s) => (
                <span
                    key={s}
                    className="flex h-[14px] w-[16px] items-center justify-center border border-b-[#555] border-l-[#eee] border-r-[#555] border-t-[#eee] bg-[#c4c5c1] text-[11px] font-bold leading-none text-black"
                >
                    {s}
                </span>
            ))}
        </div>
    )
}

function Rail({ children }: { children: ReactNode }) {
    return (
        <div className="flex h-[40px] w-[27px] items-center justify-center rounded-l-[4px] border-l border-t border-l-[#d8d8d4] border-t-[#d8d8d4] bg-[#bcbeba]">
            <svg viewBox="0 0 27 26" className="h-[26px] w-[26px]">{children}</svg>
        </div>
    )
}

function Spin({ children }: { children: ReactNode }) {
    return (
        <div className="flex h-[15px] w-[15px] items-center justify-center border border-b-[#444] border-l-[#e8e8e4] border-r-[#444] border-t-[#e8e8e4] bg-[#bcbeba]">
            <svg viewBox="0 0 14 14" className="h-[13px] w-[13px]">{children}</svg>
        </div>
    )
}
